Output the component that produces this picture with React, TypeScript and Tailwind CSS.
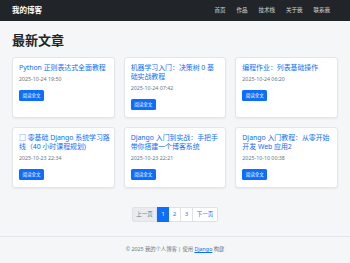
const posts = [
  { lines: ["Python 正则表达式全面教程"], date: "2025-10-24 19:50" },
  { lines: ["机器学习入门：决策树 0 基", "础实战教程"], date: "2025-10-24 07:42" },
  { lines: ["编程作业：列表基础操作"], date: "2025-10-24 06:20" },
  { lines: ["□ 零基础 Django 系统学习路", "线（40 小时课程规划)"], date: "2025-10-23 22:34" },
  { lines: ["Django 入门到实战：手把手", "带你搭建一个博客系统"], date: "2025-10-23 22:21" },
  { lines: ["Django 入门教程：从零开始", "开发 Web 应用2"], date: "2025-10-10 00:38" },
];

const navLinks = ["首页", "作品", "技术栈", "关于我", "联系我"];

export default function App() {
  return (
    <div
      className="min-h-[263px] bg-[#f5f6f8] flex flex-col"
      style={{ fontFamily: '"Noto Sans", "Noto Sans CJK SC", sans-serif' }}
    >
      <nav className="h-[21px] bg-[#212529] flex items-center justify-between px-[12px]">
        <span className="text-white font-bold text-[7.5px] leading-none">我的博客</span>
        <ul className="flex gap-[11px] pr-[8px]">
          {navLinks.map((l) => (
            <li key={l} className="text-[5.5px] leading-none text-white/80">
              {l}
            </li>
          ))}
        </ul>
      </nav>

      <main className="px-[12px] flex-1">
        <h1 className="mt-[11px] mb-[9px] text-[13px] leading-[16px] font-bold text-[#212529]">
          最新文章
        </h1>

        <div className="grid grid-cols-3 gap-[9px]">
          {posts.map((p) => (
            <div
              key={p.date}
              className="bg-white border border-[#e3e6ea] rounded-[3px] shadow-[0_1px_2px_rgba(0,0,0,0.06)] px-[6px] pt-[5px] pb-[7px] text-[7px] leading-[9px] overflow-hidden"
            >
              <a className="block text-[6.9px] leading-[9px] text-[#0d6efd]">
                {p.lines.map((line) => (
                  <span key={line} className="block whitespace-nowrap">
                    {line}
                  </span>
                ))}
              </a>
              <p className="mt-[4px] text-[5.3px] leading-[7px] text-[#6c757d]">{p.date}</p>
              <button className="block mt-[7px] h-[11px] w-[25px] rounded-[1.5px] bg-[#0d6efd] text-white text-[4.5px] leading-none">
                阅读全文
              </button>
            </div>
          ))}
        </div>

        <div className="mt-[19px] mb-[14px] flex justify-center">
          <div className="flex h-[15px] text-[5.5px] leading-none">
            <span className="w-[25px] flex items-center justify-center bg-[#e9ecef] text-[#6c757d] border border-[#dee2e6] rounded-l-[2px]">
              上一页
            </span>
            <span className="w-[12px] flex items-center justify-center bg-[#0d6efd] text-white border border-[#0d6efd]">
              1
            </span>
            <span className="w-[12px] flex items-center justify-center bg-white text-[#0d6efd] border-y border-r border-[#dee2e6]">
              2
            </span>
            <span className="w-[12px] flex items-center justify-center bg-white text-[#0d6efd] border-y border-r border-[#dee2e6]">
              3
            </span>
            <span className="w-[25px] flex items-center justify-center bg-white text-[#0d6efd] border-y border-r border-[#dee2e6] rounded-r-[2px]">
              下一页
            </span>
          </div>
        </div>
      </main>

      <footer className="border-t border-[#e3e6ea] h-[27px] flex items-center justify-center text-[5.3px] leading-none text-[#6c757d]">
        © 2025 我的个人博客 | 使用&nbsp;<a className="text-[#0d6efd] underline">Django</a>&nbsp;构建
      </footer>
    </div>
  );
}
